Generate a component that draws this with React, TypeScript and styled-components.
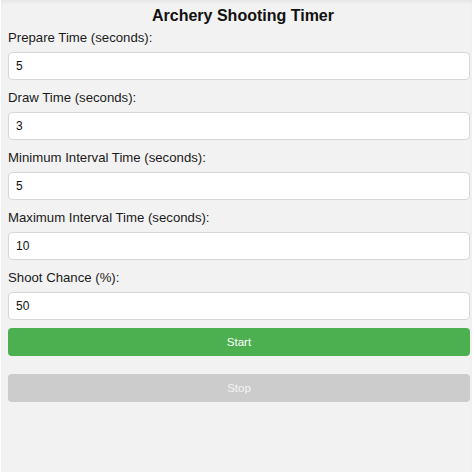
import React from "react";
import styled, { createGlobalStyle } from "styled-components";

const Global = createGlobalStyle`
  html, body { margin: 0; padding: 0; background: #ffffff; }
  body { font-family: "Liberation Sans", Arial, sans-serif; color: #111; }
  * { box-sizing: border-box; }
`;

const Card = styled.div`
  width: 471px;
  height: 472px;
  margin-left: 1px;
  background: #f2f2f2;
  box-shadow: inset 0 3px 4px -2px rgba(0, 0, 0, 0.08);
  padding: 6px 0 0 7px;
  display: flex;
  flex-direction: column;
`;

const Title = styled.h1`
  margin: 0 0 4px;
  font-size: 16px;
  line-height: 20px;
  font-weight: bold;
  text-align: center;
  color: #111;
  width: 470px;
`;

const Field = styled.div`
  display: flex;
  flex-direction: column;
  gap: 6px;
  margin-bottom: 10px;
`;

const Label = styled.label`
  font-size: 13.2px;
  line-height: 16px;
  color: #1a1a1a;
`;

const Input = styled.input`
  width: 462px;
  height: 28px;
  border: 1px solid #d6d6d6;
  border-radius: 4px;
  background: #fff;
  padding: 0 7px;
  font-family: "Liberation Sans", Arial, sans-serif;
  font-size: 12px;
  color: #111;
  outline: none;
`;

const Button = styled.button<{ $variant: "start" | "stop" }>`
  width: 462px;
  height: 28px;
  border: none;
  border-radius: 4px;
  font-family: "Liberation Sans", Arial, sans-serif;
  font-size: 11.5px;
  color: ${(p) => (p.$variant === "start" ? "#ffffff" : "#f4f4f4")};
  background: ${(p) => (p.$variant === "start" ? "#4caf50" : "#cccccc")};
  margin-top: ${(p) => (p.$variant === "start" ? "-2px" : "18px")};
  padding: 0;
`;

const fields = [
  { label: "Prepare Time (seconds):", value: "5" },
  { label: "Draw Time (seconds):", value: "3" },
  { label: "Minimum Interval Time (seconds):", value: "5" },
  { label: "Maximum Interval Time (seconds):", value: "10" },
  { label: "Shoot Chance (%):", value: "50" },
];

export default function App() {
  return (
    <>
      <Global />
      <Card>
        <Title>Archery Shooting Timer</Title>
        {fields.map((f) => (
          <Field key={f.label}>
            <Label>{f.label}</Label>
            <Input type="number" defaultValue={f.value} />
          </Field>
        ))}
        <Button $variant="start">Start</Button>
        <Button $variant="stop" disabled>
          Stop
        </Button>
      </Card>
    </>
  );
}
